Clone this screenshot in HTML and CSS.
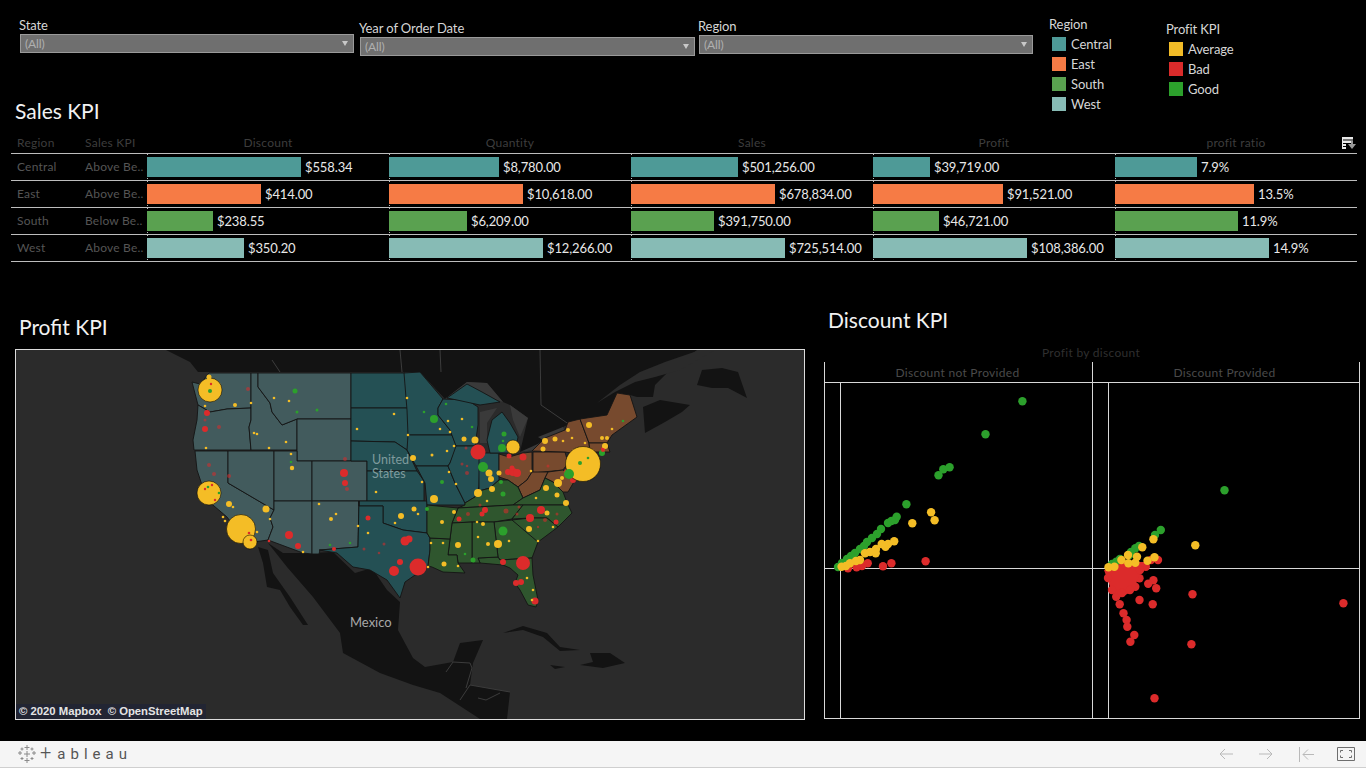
FILE: index.html
```html
<!DOCTYPE html>
<html lang="en">
<head>
<meta charset="utf-8">
<title>Sales KPI dashboard</title>
<link rel="stylesheet" href="styles.css">
</head>
<body>
<main class="dash">
  <header class="controls">
    <div class="filter filter-state">
      <div class="filter-label">State</div>
      <div class="select"><span>(All)</span><i class="caret"></i></div>
    </div>
    <div class="filter filter-year">
      <div class="filter-label">Year of Order Date</div>
      <div class="select"><span>(All)</span><i class="caret"></i></div>
    </div>
    <div class="filter filter-region">
      <div class="filter-label">Region</div>
      <div class="select"><span>(All)</span><i class="caret"></i></div>
    </div>
    <div class="legend legend-region">
      <div class="legend-title">Region</div>
      <div class="legend-item"><i class="swatch c-central"></i>Central</div>
      <div class="legend-item"><i class="swatch c-east"></i>East</div>
      <div class="legend-item"><i class="swatch c-south"></i>South</div>
      <div class="legend-item"><i class="swatch c-west"></i>West</div>
    </div>
    <div class="legend legend-kpi">
      <div class="legend-title">Profit KPI</div>
      <div class="legend-item"><i class="swatch c-avg"></i>Average</div>
      <div class="legend-item"><i class="swatch c-bad"></i>Bad</div>
      <div class="legend-item"><i class="swatch c-good"></i>Good</div>
    </div>
  </header>

  <section class="sales">
    <h2 class="sales-title">Sales KPI</h2>
    <div class="table">
      <div class="row head">
        <div class="h-region">Region</div><div>Sales KPI</div>
        <div class="h-num">Discount</div><div class="h-num">Quantity</div><div class="h-num">Sales</div><div class="h-num">Profit</div>
        <div class="h-num">profit ratio
          <svg class="sort-icon" width="16" height="14" viewBox="0 0 16 14"><path class="ico-w" d="M1 1h11v2.500H1zM1 4.500h11v2.500H1zM1 8h4v2H1zM1 11h4v2H1zM1 1h1v12H1z"/><path class="ico-g" d="M7 8h3V5h2v3h3l-4 5z"/></svg>
        </div>
      </div>
      <div class="row">
        <div class="lbl lbl-region">Central</div><div class="lbl">Above Be..</div>
        <div class="cell"><i class="bar c-central" style="width:154px"></i>$558.34</div>
        <div class="cell"><i class="bar c-central" style="width:110px"></i>$8,780.00</div>
        <div class="cell"><i class="bar c-central" style="width:107px"></i>$501,256.00</div>
        <div class="cell"><i class="bar c-central" style="width:57px"></i>$39,719.00</div>
        <div class="cell"><i class="bar c-central" style="width:82px"></i>7.9%</div>
      </div>
      <div class="row">
        <div class="lbl lbl-region">East</div><div class="lbl">Above Be..</div>
        <div class="cell"><i class="bar c-east" style="width:114px"></i>$414.00</div>
        <div class="cell"><i class="bar c-east" style="width:134px"></i>$10,618.00</div>
        <div class="cell"><i class="bar c-east" style="width:144px"></i>$678,834.00</div>
        <div class="cell"><i class="bar c-east" style="width:130px"></i>$91,521.00</div>
        <div class="cell"><i class="bar c-east" style="width:139px"></i>13.5%</div>
      </div>
      <div class="row">
        <div class="lbl lbl-region">South</div><div class="lbl">Below Be..</div>
        <div class="cell"><i class="bar c-south" style="width:66px"></i>$238.55</div>
        <div class="cell"><i class="bar c-south" style="width:78px"></i>$6,209.00</div>
        <div class="cell"><i class="bar c-south" style="width:83px"></i>$391,750.00</div>
        <div class="cell"><i class="bar c-south" style="width:66px"></i>$46,721.00</div>
        <div class="cell"><i class="bar c-south" style="width:123px"></i>11.9%</div>
      </div>
      <div class="row">
        <div class="lbl lbl-region">West</div><div class="lbl">Above Be..</div>
        <div class="cell"><i class="bar c-west" style="width:97px"></i>$350.20</div>
        <div class="cell"><i class="bar c-west" style="width:154px"></i>$12,266.00</div>
        <div class="cell"><i class="bar c-west" style="width:154px"></i>$725,514.00</div>
        <div class="cell"><i class="bar c-west" style="width:154px"></i>$108,386.00</div>
        <div class="cell"><i class="bar c-west" style="width:154px"></i>14.9%</div>
      </div>
    </div>
  </section>

  <section class="lower">
    <div class="profit-panel">
      <h2 class="panel-title profit-title">Profit KPI</h2>
      <div class="map">
        <svg class="map-svg" width="788" height="369" viewBox="16 350 788 369">
          <rect class="ocean" x="16" y="350" width="788" height="369"/>
          <g class="land">
            <polygon points="166,350 697,350 670,370 655,385 653,397 637,397 630,395 617,393 610,416 585,420 565,426 545,438 531,450 520,452 528,418 510,405 503,402 487,383 467,382 445,399 420,372 205,372 198,372 190,362"/>
            <polygon points="643,407 660,400 690,405 682,412 665,422 645,433"/>
            <polygon points="697,385 702,370 722,368 738,372 747,398 728,388 712,388"/>
            <polygon points="268,543 283,553 312,553 333,552 355,573 372,568 387,590 400,602 398,630 413,658 425,667 453,662 460,643 483,640 473,663 470,685 510,692 507,719 480,719 440,693 413,685 380,673 343,653 340,633 313,597 287,567"/>
            <polygon points="258,547 268,550 273,573 290,597 308,625 303,625 290,607 280,590 267,587 263,563"/>
            <polygon points="503,633 523,626 547,633 560,647 580,650 560,651 543,637 523,630"/>
            <polygon points="590,653 610,653 625,663 603,668 580,665 593,662"/>
            <polygon points="550,665 565,667 555,669"/>
          </g>
          <polygon class="river" points="597,403 620,385 640,372 665,362 700,350 715,350 680,370 655,377 635,382 615,392"/>
          <g class="borders-land">
            <path d="M446,672 453,662 470,663 472,668 466,688M460,700 470,685 510,692M478,698 486,700 500,693"/>
            <path d="M272,360 280,372M440,350 441,372M400,350 402,372M540,350 541,405 570,425"/>
          </g>
          <g class="lakes">
            <polygon points="445,399 467,382 487,383 503,402 490,398 478,405 468,396 457,400"/>
            <polygon points="480,412 497,408 487,423 487,443 480,443"/>
            <polygon points="510,405 528,418 520,437 513,420"/>
            <polygon points="520,452 540,443 534,450"/>
            <polygon points="538,437 563,427 565,432 543,440"/>
          </g>
          <g class="states west">
            <polygon points="209,373 251,373 251,408 227,409 210,412 198,405 192,382 200,384"/>
            <polygon points="198,405 210,412 227,409 251,408 251,420 249,427 251,450 194,450 193,440 197,420"/>
            <polygon points="251,373 258,373 258,387 270,403 272,412 282,425 297,419 297,450 251,450 249,427 251,420"/>
            <polygon points="258,373 351,373 351,419 297,419 282,425 272,412 270,403 258,387"/>
            <polygon points="297,419 351,419 351,461 297,461"/>
            <polygon points="195,451 228,451 228,483 274,510 270,518 273,527 268,540 247,543 227,517 207,500 197,470"/>
            <polygon points="228,451 274,451 274,510 228,483"/>
            <polygon points="274,451 297,451 297,461 312,461 312,501 274,501"/>
            <polygon points="312,461 367,461 367,501 312,501"/>
            <polygon points="274,501 312,501 312,554 303,553 268,540 273,527 270,518 274,510"/>
            <polygon points="312,501 359,501 358,547 320,550 319,554 312,554"/>
          </g>
          <g class="states central">
            <polygon points="351,373 405,373 408,408 351,408"/>
            <polygon points="351,408 408,408 409,440 407,450 395,442 351,441"/>
            <polygon points="351,441 395,442 407,450 417,471 367,471 367,461 351,461"/>
            <polygon points="367,471 417,471 424,481 424,501 367,501"/>
            <polygon points="359,501 427,501 427,533 403,530 383,523 383,506 359,506"/>
            <polygon points="359,501 359,506 383,506 383,523 403,530 427,533 430,538 430,550 428,566 405,582 400,598 387,580 370,570 353,567 337,553 319,550 358,547"/>
            <polygon points="404,373 420,372 443,399 438,408 438,415 450,430 452,435 408,435 407,410"/>
            <polygon points="408,435 452,435 457,447 450,463 448,466 416,466 407,450"/>
            <polygon points="416,466 448,466 455,483 465,503 465,505 427,505 425,483"/>
            <polygon points="443,399 467,400 478,407 478,425 475,446 456,446 450,430 438,415 438,408"/>
            <polygon points="456,446 478,446 480,453 479,487 475,497 465,503 455,483 448,466 450,463"/>
            <polygon points="479,453 499,453 499,480 490,488 479,491"/>
            <polygon points="487,440 492,420 502,412 510,423 518,437 515,453 490,453"/>
            <polygon points="447,398 467,384 482,392 500,402 480,405 457,400"/>
          </g>
          <g class="states east">
            <polygon points="499,454 509,457 523,453 532,452 532,472 527,480 518,487 508,480 499,477"/>
            <polygon points="533,452 565,452 568,463 563,470 533,473"/>
            <polygon points="532,451 545,438 565,430 568,422 580,419 589,443 590,452 583,455 565,452"/>
            <polygon points="580,419 607,415 617,393 630,395 637,417 612,435 607,443 589,443"/>
            <polygon points="589,443 607,443 610,452 590,452"/>
            <polygon points="532,472 548,472 545,478 540,490 523,498 518,487 527,480"/>
            <polygon points="548,472 563,470 575,480 568,492 563,492 553,482 545,478"/>
          </g>
          <g class="states south">
            <polygon points="458,508 465,505 465,503 475,497 479,491 490,488 499,480 508,480 518,487 523,498 513,505"/>
            <polygon points="523,498 540,490 545,478 553,482 563,492 568,505 513,505"/>
            <polygon points="452,523 458,508 513,505 523,505 512,519 494,522 472,522"/>
            <polygon points="512,519 523,505 568,505 572,513 558,527 547,518 530,518"/>
            <polygon points="512,520 530,518 547,518 558,527 538,542 527,537"/>
            <polygon points="494,522 512,520 538,542 532,558 500,560 498,557"/>
            <polygon points="498,557 500,560 532,558 533,575 538,600 536,607 528,605 520,590 515,583 518,575 510,568 503,565 480,563 478,558"/>
            <polygon points="472,522 494,522 498,557 478,558 480,563 472,563"/>
            <polygon points="452,523 472,522 472,563 458,563 457,555 448,555 450,539"/>
            <polygon points="430,538 450,539 448,555 457,555 458,563 465,573 443,572 432,567 428,566 430,550"/>
            <polygon points="427,505 458,508 452,523 450,539 430,538 427,533"/>
          </g>
          <text class="map-country map-us" x="372" y="464">United</text>
          <text class="map-country map-us" x="372" y="478">States</text>
          <text class="map-country map-mx" x="350" y="627">Mexico</text>
          <g class="dot-r dim">
            <circle cx="219" cy="427" r="2"/><circle cx="205" cy="420" r="1.500"/><circle cx="248" cy="389" r="2"/><circle cx="209" cy="465" r="2"/><circle cx="214" cy="474" r="2"/><circle cx="229" cy="476" r="2"/><circle cx="345" cy="459" r="2"/><circle cx="347" cy="489" r="2"/><circle cx="384" cy="544" r="1.500"/><circle cx="364" cy="549" r="1.500"/><circle cx="379" cy="553" r="1.300"/><circle cx="468" cy="514" r="2"/><circle cx="480" cy="505" r="1.500"/><circle cx="545" cy="520" r="2"/><circle cx="557" cy="514" r="1.500"/><circle cx="517" cy="514" r="1.500"/><circle cx="519" cy="507" r="1.500"/><circle cx="538" cy="527" r="1.200"/><circle cx="467" cy="473" r="2"/><circle cx="467" cy="466" r="1.300"/><circle cx="462" cy="464" r="1.500"/><circle cx="466" cy="448" r="1.500"/><circle cx="548" cy="466" r="1.500"/><circle cx="506" cy="511" r="2.500"/>
          </g>
          <g class="dot-r">
            <circle cx="207" cy="413" r="3"/><circle cx="205" cy="429" r="3"/><circle cx="344" cy="473" r="4"/><circle cx="345" cy="483" r="3"/><circle cx="289" cy="535" r="4"/><circle cx="298" cy="546" r="3"/><circle cx="334" cy="549" r="2"/><circle cx="269" cy="541" r="1.300"/><circle cx="368" cy="518" r="2.500"/><circle cx="405" cy="541" r="4.500"/><circle cx="409" cy="539" r="3.500"/><circle cx="394" cy="571" r="5"/><circle cx="400" cy="562" r="3"/><circle cx="478" cy="452" r="7.500"/><circle cx="418" cy="567" r="8.500"/><circle cx="523" cy="563" r="7"/><circle cx="530" cy="518" r="4"/><circle cx="541" cy="510" r="4"/><circle cx="503" cy="562" r="3"/><circle cx="485" cy="510" r="3"/><circle cx="482" cy="514" r="2.500"/><circle cx="556" cy="522" r="2.500"/><circle cx="459" cy="519" r="2.500"/><circle cx="513" cy="472" r="4"/><circle cx="508" cy="472" r="3"/><circle cx="517" cy="473" r="4"/><circle cx="512" cy="468" r="2.500"/><circle cx="523" cy="457" r="3.500"/><circle cx="509" cy="456" r="2.500"/><circle cx="567" cy="472" r="3"/><circle cx="573" cy="480" r="3"/><circle cx="569" cy="466" r="2.500"/><circle cx="516" cy="583" r="3"/><circle cx="521" cy="582" r="3"/><circle cx="535" cy="601" r="3.500"/><circle cx="603" cy="449" r="2"/>
          </g>
          <g class="dot-y halo">
            <circle cx="210" cy="390" r="12"/><circle cx="209" cy="493" r="12"/><circle cx="241" cy="529" r="14.500"/><circle cx="250" cy="542" r="7"/><circle cx="583" cy="464" r="17.500"/><circle cx="513" cy="447" r="7"/>
          </g>
          <g class="dot-y">
            <circle cx="209" cy="377" r="2.500"/><circle cx="235" cy="405" r="2"/><circle cx="251" cy="403" r="1.300"/><circle cx="205" cy="406" r="1.300"/><circle cx="274" cy="398" r="1.300"/><circle cx="289" cy="401" r="1.300"/><circle cx="254" cy="433" r="1.300"/><circle cx="257" cy="434" r="1.300"/><circle cx="286" cy="442" r="1.300"/><circle cx="269" cy="448" r="1.300"/><circle cx="206" cy="448" r="1.300"/><circle cx="291" cy="454" r="1.300"/><circle cx="292" cy="468" r="2.200"/><circle cx="229" cy="504" r="3"/><circle cx="233" cy="507" r="1.300"/><circle cx="266" cy="509" r="3.500"/><circle cx="270" cy="519" r="1.300"/><circle cx="331" cy="519" r="2"/><circle cx="336" cy="514" r="1.300"/><circle cx="319" cy="504" r="1.300"/><circle cx="358" cy="526" r="1.300"/><circle cx="368" cy="533" r="1.300"/><circle cx="395" cy="523" r="1.300"/><circle cx="401" cy="516" r="3"/><circle cx="376" cy="492" r="1.300"/><circle cx="357" cy="429" r="1.300"/><circle cx="394" cy="414" r="1.300"/><circle cx="407" cy="398" r="1.300"/><circle cx="408" cy="435" r="1.300"/><circle cx="223" cy="517" r="1.300"/><circle cx="225" cy="521" r="1.300"/><circle cx="257" cy="532" r="1.300"/><circle cx="303" cy="552" r="1.300"/>
            <circle cx="478" cy="493" r="4"/><circle cx="434" cy="499" r="4"/><circle cx="475" cy="440" r="3.500"/><circle cx="498" cy="544" r="4"/><circle cx="589" cy="425" r="3"/><circle cx="545" cy="441" r="3"/><circle cx="555" cy="439" r="2.500"/><circle cx="543" cy="449" r="2.500"/><circle cx="464" cy="439" r="2.500"/><circle cx="489" cy="473" r="3.500"/><circle cx="491" cy="479" r="3"/><circle cx="499" cy="473" r="2.500"/><circle cx="492" cy="489" r="3"/><circle cx="546" cy="488" r="3"/><circle cx="557" cy="495" r="2.500"/><circle cx="566" cy="503" r="3"/><circle cx="413" cy="458" r="3"/><circle cx="414" cy="509" r="2.500"/><circle cx="454" cy="512" r="2"/><circle cx="442" cy="522" r="2"/><circle cx="458" cy="545" r="3"/><circle cx="444" cy="564" r="2.500"/><circle cx="488" cy="544" r="2"/><circle cx="529" cy="529" r="3"/><circle cx="483" cy="524" r="2"/><circle cx="547" cy="513" r="2.500"/><circle cx="568" cy="430" r="2"/><circle cx="602" cy="438" r="2"/><circle cx="607" cy="438" r="2"/><circle cx="605" cy="446" r="3"/><circle cx="558" cy="483" r="4"/><circle cx="562" cy="478" r="2"/>
            <circle cx="448" cy="421" r="1.300"/><circle cx="462" cy="419" r="1.300"/><circle cx="440" cy="429" r="1.300"/><circle cx="450" cy="432" r="1.300"/><circle cx="432" cy="455" r="1.500"/><circle cx="447" cy="451" r="1.300"/><circle cx="454" cy="446" r="1.300"/><circle cx="449" cy="472" r="1.300"/><circle cx="456" cy="484" r="1.300"/><circle cx="422" cy="482" r="1.300"/><circle cx="487" cy="501" r="1.300"/><circle cx="418" cy="514" r="1.300"/><circle cx="431" cy="543" r="1.300"/><circle cx="443" cy="543" r="1.300"/><circle cx="477" cy="522" r="1.300"/><circle cx="478" cy="537" r="1.300"/><circle cx="509" cy="541" r="1.300"/><circle cx="536" cy="498" r="1.300"/><circle cx="563" cy="441" r="1.300"/><circle cx="572" cy="438" r="1.300"/><circle cx="585" cy="443" r="1.300"/><circle cx="612" cy="429" r="1.300"/><circle cx="531" cy="471" r="1.300"/><circle cx="428" cy="567" r="1.300"/><circle cx="458" cy="566" r="1.300"/><circle cx="553" cy="527" r="1.300"/><circle cx="538" cy="541" r="1.300"/><circle cx="527" cy="578" r="1.300"/><circle cx="533" cy="590" r="1.300"/><circle cx="532" cy="600" r="1.300"/>
          </g>
          <g class="dot-g">
            <circle cx="569" cy="474" r="5"/><circle cx="483" cy="467" r="5"/><circle cx="503" cy="531" r="4.500"/><circle cx="502" cy="448" r="4"/><circle cx="434" cy="419" r="4"/><circle cx="503" cy="494" r="2.500"/><circle cx="504" cy="434" r="2.500"/><circle cx="473" cy="560" r="2.500"/><circle cx="442" cy="482" r="2"/><circle cx="427" cy="509" r="2"/><circle cx="602" cy="453" r="3"/><circle cx="580" cy="463" r="2"/><circle cx="501" cy="482" r="2"/><circle cx="465" cy="554" r="1.300"/><circle cx="295" cy="391" r="2.500"/><circle cx="297" cy="412" r="1.500"/><circle cx="317" cy="410" r="1.500"/><circle cx="210" cy="391" r="2"/><circle cx="330" cy="545" r="1.300"/><circle cx="350" cy="543" r="1.300"/><circle cx="291" cy="462" r="1.300"/><circle cx="208" cy="487" r="1.300"/><circle cx="219" cy="493" r="1.300"/><circle cx="424" cy="412" r="1.300"/><circle cx="446" cy="404" r="1.300"/><circle cx="472" cy="427" r="1.300"/><circle cx="503" cy="441" r="1.300"/><circle cx="588" cy="458" r="1.300"/><circle cx="623" cy="421" r="1.300"/>
          </g>
          <g class="dot-r">
            <circle cx="211" cy="384" r="1.200"/><circle cx="212" cy="485" r="1.200"/><circle cx="205" cy="489" r="1.200"/><circle cx="215" cy="500" r="1.200"/><circle cx="249" cy="533" r="1.300"/><circle cx="251" cy="540" r="1.300"/><circle cx="603" cy="450" r="2"/>
          </g>
        </svg>
        <div class="attribution">© 2020 Mapbox&nbsp; © OpenStreetMap</div>
      </div>
    </div>
    <div class="discount-panel">
      <h2 class="panel-title discount-title">Discount KPI</h2>
      <svg class="scatter" width="537" height="375" viewBox="824 345 537 375">
        <text class="sc-title" x="1091" y="357">Profit by discount</text>
        <text class="sc-facet" x="957.500" y="377">Discount not Provided</text>
        <text class="sc-facet" x="1224.500" y="377">Discount Provided</text>
        <path class="sc-line" d="M824.500 362V718.500M1092.500 362V718.500M1359.500 362V718.500M824 382.500H1360M824 718.500H1360M840.500 382V718M1108.500 382V718M824 568.500H1360"/>
        <g class="dot-g">
          <circle cx="1022.400" cy="401.300" r="4"/><circle cx="985.500" cy="434.300" r="4"/><circle cx="949.600" cy="467.300" r="4"/><circle cx="943.300" cy="469.300" r="4"/><circle cx="938.500" cy="475.300" r="4"/><circle cx="906.400" cy="504.300" r="4"/><circle cx="896.700" cy="516.700" r="4"/><circle cx="895" cy="520" r="4"/><circle cx="891.400" cy="521" r="4"/><circle cx="888" cy="523" r="4"/><circle cx="881" cy="529" r="4"/><circle cx="877" cy="534" r="4"/><circle cx="872" cy="538" r="4"/><circle cx="867" cy="542" r="4"/><circle cx="864" cy="546" r="4"/><circle cx="860" cy="549" r="4"/><circle cx="855" cy="553" r="4"/><circle cx="851" cy="556" r="4"/><circle cx="847" cy="559" r="4"/><circle cx="842" cy="563" r="4"/><circle cx="838" cy="567" r="4"/>
          <circle cx="1224.500" cy="490.300" r="4"/><circle cx="1160.800" cy="530" r="4"/><circle cx="1155" cy="535" r="4"/><circle cx="1139" cy="546" r="4"/><circle cx="1135.300" cy="548.300" r="4"/><circle cx="1131" cy="552" r="4"/><circle cx="1129.400" cy="555" r="4"/><circle cx="1120" cy="559" r="4"/><circle cx="1116.200" cy="561.700" r="4"/><circle cx="1112" cy="564" r="4"/>
        </g>
        <g class="dot-r">
          <circle cx="925.600" cy="561.300" r="4"/><circle cx="891.400" cy="563.300" r="4"/><circle cx="883" cy="566.300" r="4"/><circle cx="867.700" cy="563.300" r="4"/><circle cx="862" cy="566" r="3"/><circle cx="856.600" cy="567.300" r="3"/><circle cx="848" cy="568.300" r="3"/>
        </g>
        <g class="dot-y">
          <circle cx="931.100" cy="512.300" r="4"/><circle cx="934.600" cy="520.300" r="4"/><circle cx="912.300" cy="523.300" r="4"/><circle cx="894.200" cy="541.300" r="4"/><circle cx="888" cy="544" r="4"/><circle cx="885.500" cy="546.700" r="4"/><circle cx="881.700" cy="544" r="4"/><circle cx="875.700" cy="553.300" r="4"/><circle cx="876" cy="549" r="4"/><circle cx="870" cy="552" r="4"/><circle cx="865" cy="553.300" r="4"/><circle cx="860" cy="560" r="4"/><circle cx="856" cy="561" r="4"/><circle cx="850" cy="563.300" r="4"/><circle cx="846" cy="566" r="4"/><circle cx="841.600" cy="566.700" r="4"/>
        </g>
        <g class="dot-r">
          <circle cx="1343.400" cy="603.300" r="4"/><circle cx="1192.500" cy="594.300" r="4"/><circle cx="1191.400" cy="644.300" r="4"/><circle cx="1154.500" cy="698.300" r="4"/><circle cx="1152.700" cy="604.300" r="4"/><circle cx="1139.500" cy="600" r="4"/><circle cx="1156.200" cy="588.300" r="4"/><circle cx="1153.400" cy="580.300" r="4"/><circle cx="1148.200" cy="583.700" r="4"/><circle cx="1139.500" cy="578.300" r="4"/><circle cx="1135.300" cy="586.700" r="4"/><circle cx="1158" cy="560" r="4"/><circle cx="1151" cy="560" r="4"/><circle cx="1145.800" cy="566.700" r="4"/><circle cx="1119.700" cy="604.300" r="4"/><circle cx="1116.200" cy="596.700" r="4"/><circle cx="1123.500" cy="613.300" r="4"/><circle cx="1126.600" cy="620" r="4"/><circle cx="1127.300" cy="626.700" r="4"/><circle cx="1134.300" cy="635" r="4"/><circle cx="1130.400" cy="641.700" r="4"/>
          <polygon points="1104,570 1125,562 1146,562 1140,572 1134,590 1122,597 1112,592"/>
          <circle cx="1130" cy="590" r="4"/><circle cx="1112" cy="590" r="4"/><circle cx="1122" cy="593" r="4"/><circle cx="1140" cy="570" r="4"/><circle cx="1108" cy="578" r="4"/><circle cx="1125" cy="565" r="4"/>
        </g>
        <g class="dot-y">
          <circle cx="1195.300" cy="545.300" r="4"/><circle cx="1153.400" cy="539.300" r="4"/><circle cx="1142.300" cy="547.300" r="4"/><circle cx="1154.500" cy="557.300" r="4"/><circle cx="1137" cy="556.700" r="4"/><circle cx="1135.300" cy="562.700" r="4"/><circle cx="1128" cy="555" r="4"/><circle cx="1121.400" cy="560" r="4"/><circle cx="1147.500" cy="560.700" r="3"/><circle cx="1108.500" cy="567.300" r="4.500"/><circle cx="1114.400" cy="566.700" r="4"/><circle cx="1128.400" cy="563.300" r="4"/>
        </g>
      </svg>
    </div>
  </section>
</main>
<footer class="toolbar">
  <div class="brand">
    <svg class="brand-mark" width="20" height="20" viewBox="0 0 20 20">
      <path d="M10 1v5M7.500 3.500h5M10 14v5M7.500 16.500h5M3 7v4M1 9h4M17 7v4M15 9h4M5 3.500v3M3.500 5h3M15 3.500v3M13.500 5h3M5 13v3M3.500 14.500h3M15 13v3M13.500 14.500h3M10 7v6M7 10h6"/>
    </svg>
    <span class="brand-name"><span class="brand-plus">+</span>ableau</span>
  </div>
  <nav class="tools">
    <svg width="14" height="12" viewBox="0 0 14 12"><path d="M14 6H1M6 1 1 6l5 5"/></svg>
    <svg width="14" height="12" viewBox="0 0 14 12"><path d="M0 6h13M8 1l5 5-5 5"/></svg>
    <svg width="15" height="15" viewBox="0 0 15 15"><path d="M.5 0v15M15 7.500H4M9 2.500l-5 5 5 5"/></svg>
    <svg class="fullscreen" width="18" height="14" viewBox="0 0 18 14"><path class="frame" d="M.5.500h17v13H.5z"/><path class="corners" d="M6 3.500H3.500v2M12 3.500h2.500v2M6 10.500H3.500v-2M12 10.500h2.500v-2"/></svg>
  </nav>
</footer>
</body>
</html>
```
FILE: styles.css
```css
* { box-sizing: border-box; }
html, body { margin: 0; padding: 0; }
body {
  width: 1366px;
  height: 768px;
  overflow: hidden;
  background: #000;
  font-family: Lato, "Open Sans", sans-serif;
  color: #e6e6e6;
}
.dash { height: 741px; background: #000; }

/* top controls */
.controls { display: flex; align-items: flex-start; height: 95px; padding-left: 20px; letter-spacing: -.1px; }
.filter { width: 334px; font-size: 13px; }
.filter-state { margin-top: 17px; }
.filter-year { margin-top: 20px; margin-left: 6px; width: 335px; }
.filter-region { margin-top: 18px; margin-left: 4px; }
.filter-label { height: 17px; line-height: 16px; margin-left: -1px; color: #d6d6d6; }
.select {
  display: flex;
  align-items: center;
  justify-content: space-between;
  height: 19px;
  padding: 0 5px 0 4px;
  background: #6f6f6f;
  border: 1px solid #9a9a9a;
  color: #b0b0b0;
  font-size: 12px;
}
.caret {
  width: 0;
  height: 0;
  border-left: 3.5px solid transparent;
  border-right: 3.5px solid transparent;
  border-top: 5px solid #c8c8c8;
}
.legend { font-size: 13px; color: #d6d6d6; }
.legend-title { height: 18px; line-height: 16px; }
.legend-region { margin-top: 16px; margin-left: 16px; width: 117px; }
.legend-kpi { margin-top: 21px; }
.legend-item { display: flex; align-items: center; gap: 5px; height: 20px; padding-left: 3px; }
.swatch { display: block; width: 14px; height: 14px; }
.c-central { background: #4e9a97; }
.c-east { background: #f67b45; }
.c-south { background: #5aa150; }
.c-west { background: #87bbb5; }
.c-avg { background: #f1bb27; }
.c-bad { background: #d92b2b; }
.c-good { background: #2ca02c; }

/* sales table */
.sales { padding-left: 11px; }
.sales-title {
  margin: 0 0 0 4px;
  height: 32px;
  line-height: 32px;
  font-size: 21px;
  font-weight: 400;
  color: #f2f2f2;
}
.table { width: 1346px; margin-top: 10px; }
.row {
  display: grid;
  grid-template-columns: 74px 62px repeat(5, 242px);
  height: 27px;
  border-bottom: 1px solid #bdbdbd;
}
.head {
  height: 17px;
  font-size: 12px;
  line-height: 12px;
  letter-spacing: .25px;
  color: #3d3d3d;
}
.h-region, .lbl-region { padding-left: 6px; }
.h-num { position: relative; text-align: center; }
.sort-icon { position: absolute; right: 0; top: -1px; }
.ico-w { fill: #e8e8e8; }
.ico-g { fill: #9a9a9a; }
.lbl { font-size: 12px; line-height: 26px; letter-spacing: .2px; color: #555; white-space: nowrap; }
.cell {
  display: flex;
  align-items: center;
  gap: 4px;
  height: 26px;
  font-size: 13px;
  letter-spacing: -.12px;
  color: #e8e8e8;
  background-image: repeating-linear-gradient(to bottom, #bbb 0 1px, transparent 1px 3px);
  background-size: 1px 100%;
  background-repeat: no-repeat;
}
.bar { display: block; height: 20px; flex: none; }

/* lower panels */
.lower { display: flex; align-items: flex-start; padding-left: 15px; gap: 19px; }
.profit-panel { width: 790px; padding-top: 52px; }
.discount-panel { width: 537px; padding-top: 45px; }
.panel-title {
  margin: 0;
  height: 26px;
  line-height: 26px;
  font-size: 21px;
  font-weight: 400;
  color: #f2f2f2;
}
.profit-title { margin: 0 0 9px 4px; }
.discount-title { margin: 0 0 12px 4px; }
.map {
  position: relative;
  width: 790px;
  height: 371px;
  border: 1px solid #dcdcdc;
}
.map-svg { display: block; }
.ocean, .river { fill: #2b2b2b; }
.land polygon { fill: #131313; }
.borders-land path { fill: none; stroke: #3c3c3c; stroke-width: 1; }
.lakes polygon { fill: #3a3a3a; }
.states polygon { stroke: #141414; stroke-width: .9; stroke-linejoin: round; }
.west polygon { fill: #425b5d; }
.central polygon { fill: #245054; }
.east polygon { fill: #774a2e; }
.south polygon { fill: #2f562e; }
.map-country { font-family: Lato, sans-serif; font-size: 12.500px; }
.map-us { fill: #7f9b9d; }
.map-mx { fill: #a8a8a8; font-size: 13px; }
.dot-r { fill: #dc2b2b; }
.dot-y { fill: #f4bd26; }
.dot-g { fill: #2ca02c; }
.dim { opacity: .55; }
.halo circle { stroke: #000; stroke-opacity: .55; stroke-width: 1; }
.attribution {
  position: absolute;
  left: 0;
  bottom: 0;
  padding: 0 3px;
  height: 15px;
  line-height: 15px;
  font-family: "Liberation Sans", Arial, sans-serif;
  font-size: 11.300px;
  font-weight: 700;
  color: #e4e4e4;
  background: rgba(28, 32, 58, .55);
}
.scatter { display: block; }
.scatter circle { r: 4.200px; }
.sc-title, .sc-facet { font-family: Lato, sans-serif; font-size: 12px; text-anchor: middle; letter-spacing: .3px; }
.sc-title { fill: #2f2f2f; }
.sc-facet { fill: #4a4a4a; }
.sc-line { fill: none; stroke: #d8d8d8; stroke-width: 1; }

/* bottom toolbar */
.toolbar {
  display: flex;
  align-items: center;
  justify-content: space-between;
  height: 27px;
  padding: 0 11px 0 17px;
  background: #f5f5f5;
  border-bottom: 1px solid #cfcfcf;
}
.brand { display: flex; align-items: center; gap: 3px; }
.brand-mark { display: block; }
.brand-mark path { fill: none; stroke: #8a8a8a; stroke-width: 1; }
.brand-name {
  font-family: Roboto, Lato, sans-serif;
  font-size: 15px;
  letter-spacing: 5px;
  color: #555;
}
.brand-plus { font-size: 20px; line-height: 15px; font-weight: 300; letter-spacing: 6px; }
.tools { display: flex; align-items: center; gap: 26px; }
.tools svg { display: block; }
.tools path { fill: none; stroke: #b9b9b9; stroke-width: 1; }
.tools .fullscreen { margin-left: -3px; }
.tools .frame { stroke: #6e6e6e; }
.tools .corners { stroke: #6e6e6e; }
```
